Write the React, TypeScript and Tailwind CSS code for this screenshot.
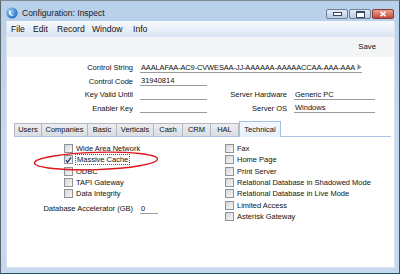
import React from "react";

function Check({ checked = false }: { checked?: boolean }) {
  return (
    <div className="w-[9px] h-[9px] border border-[#8f9296] bg-gradient-to-br from-[#d4d6d9] to-[#f7f7f7] flex items-center justify-center shrink-0">
      {checked && (
        <svg width="8" height="8" viewBox="0 0 8 8">
          <path d="M1 4.2 L3 6.4 L7 1" fill="none" stroke="#1d3b7a" strokeWidth="1.5" />
        </svg>
      )}
    </div>
  );
}

function CbRow({ label, checked, focus }: { label: string; checked?: boolean; focus?: boolean }) {
  return (
    <div className="h-[11.4px] flex items-center gap-[3px]">
      <Check checked={checked} />
      <span
        className={
          "leading-[9px] whitespace-nowrap " +
          (focus ? "border border-dotted border-[#555] px-[1px] -ml-[1px]" : "")
        }
      >
        {label}
      </span>
    </div>
  );
}

function Field({ w, value }: { w: string; value?: string }) {
  return (
    <div className={w + " h-[10px] border-b border-[#9a9a9a] leading-[9px] pl-[1px] overflow-hidden whitespace-nowrap"}>
      {value}
    </div>
  );
}

export default function App() {
  const tabs: [string, string][] = [
    ["Users", "w-[28px]"],
    ["Companies", "w-[46px]"],
    ["Basic", "w-[29px]"],
    ["Verticals", "w-[37px]"],
    ["Cash", "w-[29px]"],
    ["CRM", "w-[28px]"],
    ["HAL", "w-[28px]"],
  ];
  return (
    <div className="relative w-[400px] h-[274px] border-t border-t-[#7f8c98] border-l border-l-[#5d666e] border-r border-r-[#45525c] border-b border-b-[#1b5466] font-['Liberation_Sans',Arial,sans-serif] text-[#111] overflow-hidden">
      <div className="h-full flex flex-col bg-gradient-to-b from-[#b9d0ea] via-[#c6d9ef] to-[#c4d8ee] pl-[5px] pr-[4px] pb-[5px]">
        {/* title bar */}
        <div className="h-[20px] flex items-start shrink-0">
          <div className="mt-[6px] w-[12px] h-[12px]">
            <svg width="12" height="12" viewBox="0 0 12 12">
              <defs>
                <radialGradient id="g1" cx="0.35" cy="0.35" r="0.7">
                  <stop offset="0" stopColor="#9fd0f5" />
                  <stop offset="1" stopColor="#1e6cc0" />
                </radialGradient>
              </defs>
              <circle cx="6" cy="6" r="5.6" fill="url(#g1)" />
              <path d="M3.2 3.5 C2 6.5 4.5 9.8 8.6 8.6 C6.2 8.8 4.2 7 4.6 4.6 Z" fill="#ffffff" />
            </svg>
          </div>
          <div className="ml-[4px] mt-[7px] text-[8.5px] leading-[11px] text-[#1a1a1a]">Configuration: Inspect</div>
          <div className="flex-1" />
          <div className="mt-[8px] mr-[1px] flex gap-[1px]">
            <div className="w-[22px] h-[10px] rounded-[2px] border border-[#6f819a] bg-gradient-to-b from-[#e4ecf6] to-[#b8cbe2] flex items-center justify-center">
              <div className="w-[7px] h-[2px] bg-white border border-[#39475a] box-content" />
            </div>
            <div className="w-[22px] h-[10px] rounded-[2px] border border-[#6f819a] bg-gradient-to-b from-[#e4ecf6] to-[#b8cbe2] flex items-center justify-center">
              <div className="w-[7px] h-[4px] bg-white border border-[#39475a] box-content border-t-2" />
            </div>
            <div className="w-[22px] h-[10px] rounded-[2px] border border-[#8c3a33] bg-gradient-to-b from-[#e8a191] to-[#c4473a] flex items-center justify-center">
              <svg width="8" height="6" viewBox="0 0 8 6">
                <path d="M1.5 0.8 L6.5 5.2 M6.5 0.8 L1.5 5.2" stroke="#ffffff" strokeWidth="1.6" />
              </svg>
            </div>
          </div>
        </div>
        {/* client area */}
        <div className="flex-1 flex flex-col bg-white border border-[#d8e4f2] border-t-0 relative">
          {/* menu bar */}
          <div className="h-[16px] shrink-0 bg-gradient-to-b from-[#f6f9fd] via-[#eaf0f8] to-[#d9e4f3] flex items-center pl-[4px] text-[8.6px] text-[#111]">
            <span className="w-[22px]">File</span>
            <span className="w-[24px]">Edit</span>
            <span className="w-[35px]">Record</span>
            <span className="w-[41px]">Window</span>
            <span>Info</span>
          </div>
          {/* toolbar */}
          <div className="h-[20px] shrink-0 bg-[#f3f4f6] flex items-center justify-end pr-[18px] text-[7.8px]">
            <span>Save</span>
          </div>
          {/* form */}
          <div className="flex-1 flex flex-col pt-[4px] text-[7.5px]">
            <div className="h-[13.5px] flex items-center">
              <div className="w-[126px] text-right">Control String</div>
              <div className="ml-[7px] w-[222px] h-[10px] border-b border-[#9a9a9a] flex items-start">
                <div className="w-[217px] leading-[9px] pl-[1px] overflow-hidden whitespace-nowrap tracking-[-0.15px]">
                  AAALAFAA-AC9-CVWESAA-JJ-AAAAAA-AAAAACCAA-AAA-AAA
                </div>
                <svg width="5" height="8" viewBox="0 0 5 8">
                  <path d="M0.5 1 L4.5 4 L0.5 7 Z" fill="#7f8aa0" />
                </svg>
              </div>
            </div>
            <div className="h-[13.5px] flex items-center">
              <div className="w-[126px] text-right">Control Code</div>
              <div className="ml-[7px]"><Field w="w-[67px]" value="31940814" /></div>
            </div>
            <div className="h-[13.5px] flex items-center">
              <div className="w-[126px] text-right">Key Valid Until</div>
              <div className="ml-[7px]"><Field w="w-[67px]" /></div>
              <div className="w-[80px] text-right">Server Hardware</div>
              <div className="ml-[7px]"><Field w="w-[81px]" value="Generic PC" /></div>
            </div>
            <div className="h-[13.5px] flex items-center">
              <div className="w-[126px] text-right">Enabler Key</div>
              <div className="ml-[7px]"><Field w="w-[67px]" /></div>
              <div className="w-[80px] text-right">Server OS</div>
              <div className="ml-[7px]"><Field w="w-[81px]" value="Windows" /></div>
            </div>
            {/* tabs */}
            <div className="mt-[6px] ml-[7px] w-[377px] h-[16px] flex items-end border-b border-[#a9c6e4]">
              {tabs.map(([t, w]) => (
                <div
                  key={t}
                  className={
                    w +
                    " h-[13px] border border-b-0 border-l-0 first:border-l border-[#b3b8bf] bg-gradient-to-b from-[#eceef1] to-[#d9dce1] flex items-center justify-center leading-[10px]"
                  }
                >
                  {t}
                </div>
              ))}
              <div className="w-[42px] h-[16px] border border-b-0 border-[#9fc2e6] bg-gradient-to-b from-[#f4f9fe] to-[#e3effb] flex items-center justify-center leading-[10px] -mb-[1px]">
                Technical
              </div>
            </div>
            {/* panel */}
            <div className="flex pt-[5.6px]">
              <div className="w-[218px] flex flex-col">
                <div className="pl-[57px] flex flex-col">
                  <CbRow label="Wide Area Network" />
                  <CbRow label="Massive Cache" checked focus />
                  <CbRow label="ODBC" />
                  <CbRow label="TAPI Gateway" />
                  <CbRow label="Data Integrity" />
                </div>
                <div className="mt-[2.5px] h-[13px] flex items-center">
                  <div className="w-[126px] text-right">Database Accelerator (GB)</div>
                  <div className="ml-[7px]"><Field w="w-[18px]" value="0" /></div>
                </div>
              </div>
              <div className="flex flex-col">
                <CbRow label="Fax" />
                <CbRow label="Home Page" />
                <CbRow label="Print Server" />
                <CbRow label="Relational Database in Shadowed Mode" />
                <CbRow label="Relational Database in Live Mode" />
                <CbRow label="Limited Access" />
                <CbRow label="Asterisk Gateway" />
              </div>
            </div>
          </div>
        </div>
      </div>
      {/* red annotation ellipse */}
      <svg className="absolute left-[31px] top-[149px]" width="128" height="22" viewBox="0 0 128 22">
        <ellipse cx="64" cy="11" rx="61.5" ry="8.6" fill="none" stroke="#e0141b" strokeWidth="1.4" transform="rotate(-1.8 64 11)" />
      </svg>
    </div>
  );
}
